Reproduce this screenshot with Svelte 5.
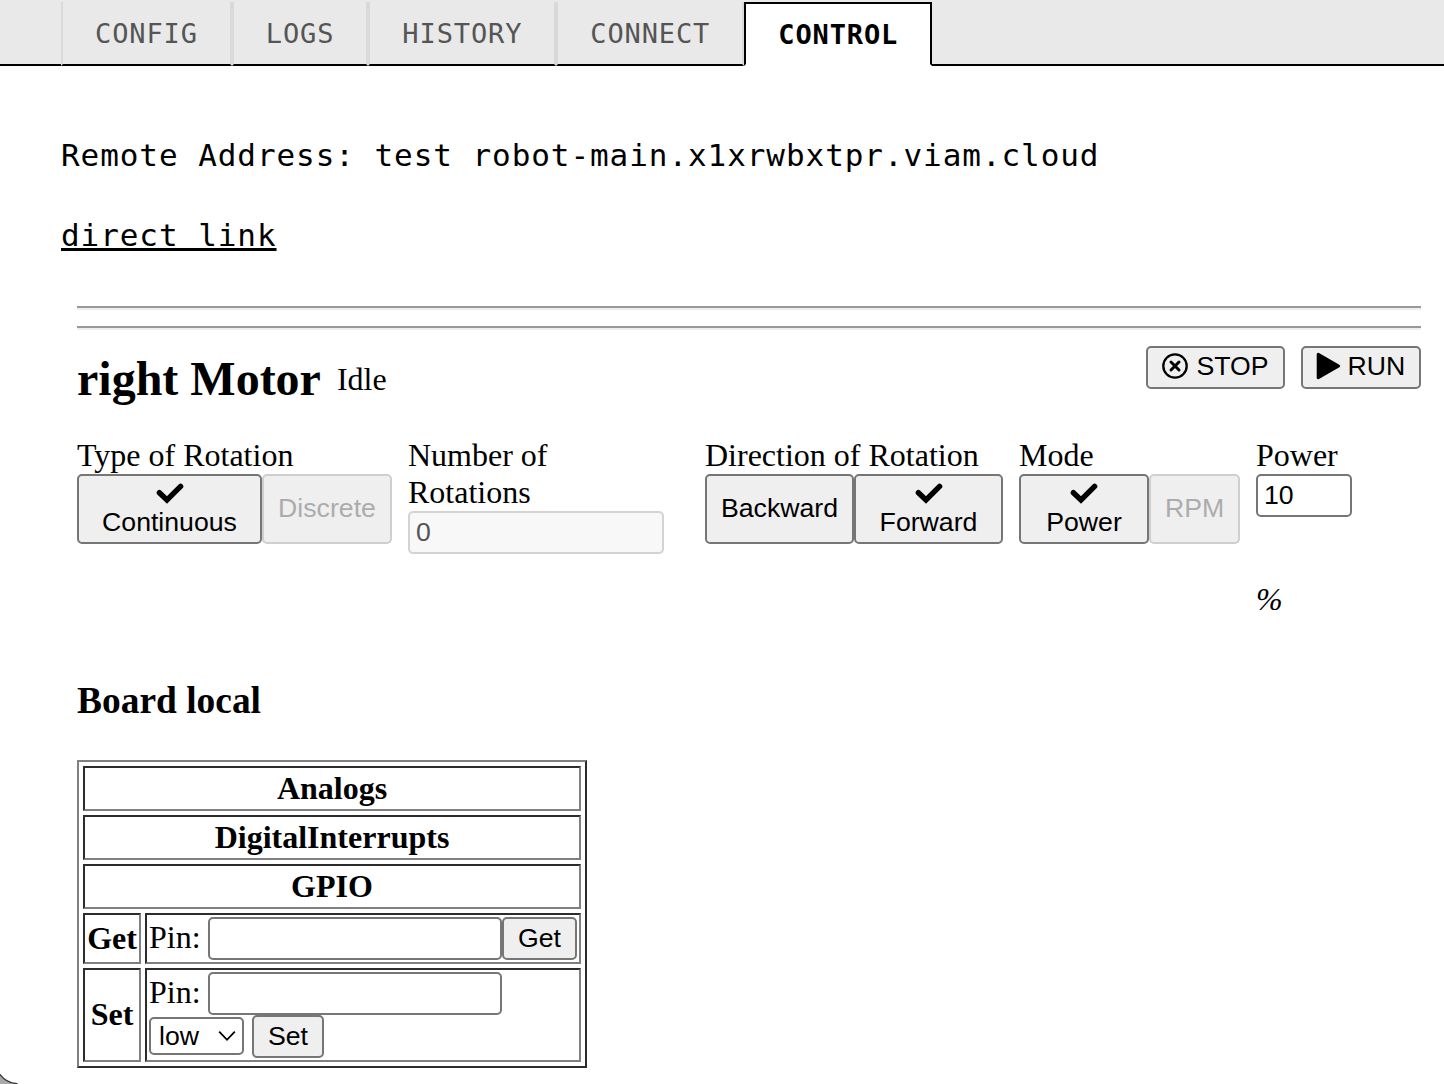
<script>
  const tabs = ['CONFIG', 'LOGS', 'HISTORY', 'CONNECT', 'CONTROL'];
  let active = $state('CONTROL');
  let rotations = $state('0');
  let power = $state('10');
  let getPin = $state('');
  let setPin = $state('');
</script>

{#snippet check()}
  <svg class="check" width="28" height="22" viewBox="0 0 28 22" fill="none" stroke="#000" stroke-width="5.4">
    <path d="M3.4 10.7 L11 18 L24.6 4.4" stroke-linecap="round" stroke-linejoin="miter" />
  </svg>
{/snippet}

<div class="page">
  <nav>
    <span class="lead"></span>
    {#each tabs as tab}
      <a class="tab" class:active={tab === active}>{tab}</a>
    {/each}
    <span class="rest"></span>
  </nav>

  <section class="address">
    <p>Remote Address: test robot-main.x1xrwbxtpr.viam.cloud</p>
    <p><a class="link">direct link</a></p>
  </section>

  <main>
    <hr />
    <hr />
    <header>
      <h2>right Motor</h2>
      <span class="status">Idle</span>
      <div class="actions">
        <button class="stop">
          <svg width="26" height="26" viewBox="0 0 26 26" fill="none" stroke="#000">
            <circle cx="13" cy="13" r="11.7" stroke-width="2.3" />
            <path d="M9 9 L17 17 M17 9 L9 17" stroke-width="3" stroke-linecap="round" />
          </svg>
          STOP
        </button>
        <button class="run">
          <svg width="25" height="28" viewBox="0 0 25 28">
            <path d="M2.2 2.2 L22.6 14 L2.2 25.8 Z" stroke="#000" stroke-width="3" stroke-linejoin="round" />
          </svg>
          RUN
        </button>
      </div>
    </header>

    <div class="controls">
      <div>
        <div class="label">Type of Rotation</div>
        <div class="group type">
          <button class="chosen">{@render check()}Continuous</button>
          <button disabled>Discrete</button>
        </div>
      </div>
      <div class="number">
        <div class="label">Number of Rotations</div>
        <input bind:value={rotations} disabled />
      </div>
      <div>
        <div class="label">Direction of Rotation</div>
        <div class="group direction">
          <button>Backward</button>
          <button class="chosen">{@render check()}Forward</button>
        </div>
      </div>
      <div>
        <div class="label">Mode</div>
        <div class="group mode">
          <button class="chosen">{@render check()}Power</button>
          <button disabled>RPM</button>
        </div>
      </div>
      <div>
        <div class="label">Power</div>
        <input class="power" bind:value={power} />
        <div class="label unit">%</div>
      </div>
    </div>

    <h3>Board local</h3>
    <table>
      <colgroup><col class="c1" /><col class="c2" /></colgroup>
      <tbody>
        <tr><th colspan="2">Analogs</th></tr>
        <tr><th colspan="2">DigitalInterrupts</th></tr>
        <tr><th colspan="2">GPIO</th></tr>
        <tr class="get">
          <th>Get</th>
          <td>
            <div class="line"><span class="pin">Pin:</span><input bind:value={getPin} /><button class="bget">Get</button></div>
          </td>
        </tr>
        <tr class="set">
          <th>Set</th>
          <td>
            <div class="line"><span class="pin">Pin:</span><input bind:value={setPin} /></div>
            <div class="line">
              <div class="select">
                <span>low</span>
                <svg width="18" height="12" viewBox="0 0 18 12" fill="none" stroke="#000" stroke-width="1.8">
                  <path d="M1.2 1.6 L9 9.8 L16.8 1.6" />
                </svg>
              </div>
              <button class="bset">Set</button>
            </div>
          </td>
        </tr>
      </tbody>
    </table>
  </main>

  <svg class="corner" width="18" height="10" viewBox="0 0 18 10">
    <path d="M-1 -1 Q5 8.5 17 9.7 L17 12 L-1 12 Z" fill="#a9a9a9" stroke="#333" stroke-width="1.2" />
  </svg>
</div>

<style>
  :global(body) {
    margin: 0;
    background: #fff;
  }
  .page {
    position: relative;
    width: 1444px;
    height: 1084px;
    overflow: hidden;
    box-sizing: border-box;
    background: #fff;
    color: #000;
    font: 32px/37px 'Liberation Serif', serif;
  }
  .page * {
    box-sizing: border-box;
  }
  nav {
    display: flex;
    height: 66px;
    padding-top: 2px;
    background: #e9e9e9;
    font: 27px/60px 'DejaVu Sans Mono', monospace;
    letter-spacing: 0.88px;
  }
  .lead {
    width: 61px;
    border-bottom: 2px solid #000;
  }
  .rest {
    flex: 1;
    border-bottom: 2px solid #000;
  }
  .tab {
    padding: 2px 32px 0;
    border: 2px solid #d9d9d9;
    border-top: 0;
    border-bottom-color: #000;
    color: #555;
  }
  .tab.active {
    padding-top: 1px;
    border: 2px solid #000;
    border-bottom-color: #fff;
    background: #fff;
    color: #000;
    font-weight: bold;
  }
  .address {
    padding: 69px 61px 0;
    font: 31px/40px 'DejaVu Sans Mono', monospace;
    letter-spacing: 0.93px;
  }
  .address p {
    margin: 0 0 40px;
    white-space: nowrap;
  }
  .link {
    text-decoration: underline;
    text-decoration-thickness: 3px;
    text-underline-offset: 2px;
    text-decoration-skip-ink: none;
  }
  main {
    padding: 11px 23px 0 77px;
  }
  hr {
    height: 4px;
    margin: 0 0 16px;
    border: 0;
    border-top: 2px solid #999;
    border-bottom: 2px solid #eee;
  }
  header {
    display: flex;
    align-items: center;
    height: 67px;
  }
  h2 {
    margin: 0;
    padding-bottom: 2px;
    font-size: 48px;
    line-height: 55px;
  }
  .status {
    margin-left: 16px;
  }
  .actions {
    display: flex;
    gap: 16px;
    margin-left: auto;
    align-self: flex-start;
  }
  button,
  input,
  .select {
    font: 26.67px/31px 'Liberation Sans', sans-serif;
    color: #000;
    border: 2px solid #767676;
    border-radius: 5px;
    margin: 0;
  }
  button {
    display: flex;
    align-items: center;
    justify-content: center;
    height: 43px;
    padding: 0;
    background: #efefef;
  }
  button:disabled {
    color: #acacac;
    border-color: #cfcfcf;
  }
  .stop {
    width: 139px;
    gap: 8px;
    padding-bottom: 2px;
  }
  .run {
    width: 120px;
    gap: 7px;
    padding: 0 1px 2px 0;
  }
  .stop svg,
  .run svg {
    margin-bottom: 1px;
  }
  .controls {
    display: grid;
    grid-template-columns: 315px 281px 298px 221px 96px;
    column-gap: 16px;
    height: 181px;
    margin-top: 24px;
  }
  .number .label {
    width: 256px;
  }
  .number input {
    width: 256px;
  }
  .group {
    display: flex;
  }
  .group button {
    flex-direction: column;
    height: 70px;
    padding-bottom: 2px;
  }
  .group .chosen {
    padding-bottom: 0;
  }
  .check {
    margin: 1px 0 3px;
  }
  .type button:first-child {
    width: 185px;
  }
  .type button:last-child {
    width: 130px;
  }
  .direction button {
    width: 149px;
  }
  .mode button:first-child {
    width: 130px;
  }
  .mode button:last-child {
    width: 91px;
  }
  input {
    display: block;
    height: 43px;
    padding: 0 6px 1px;
    background: #fff;
  }
  input:disabled {
    border-color: #d3d3d3;
    background: #f8f8f8;
    color: #545454;
  }
  .power {
    width: 96px;
  }
  .unit {
    margin-top: 64px;
    font-style: italic;
  }
  h3 {
    margin: 61px 0 37px;
    font-size: 37.44px;
    line-height: 44px;
  }
  table {
    width: 510px;
    table-layout: fixed;
    border-collapse: separate;
    border-spacing: 4px;
    border: 2px solid;
    border-color: #808080 #2c2c2c #2c2c2c #808080;
  }
  .c1 {
    width: 58px;
  }
  .c2 {
    width: 436px;
  }
  tr {
    height: 45px;
  }
  tr.get {
    height: 51px;
  }
  tr.set {
    height: 94px;
  }
  th,
  td {
    padding: 2px;
    border: 2px solid;
    border-color: #2c2c2c #808080 #808080 #2c2c2c;
    vertical-align: middle;
  }
  th {
    padding: 0;
  }
  .set th {
    padding-bottom: 2px;
  }
  .line {
    display: flex;
    align-items: center;
    height: 43px;
  }
  .pin {
    width: 59px;
    padding-bottom: 2px;
  }
  .line input {
    width: 294px;
  }
  .bget {
    width: 75px;
  }
  .bset {
    width: 72px;
    margin-left: 8px;
  }
  .select {
    display: flex;
    align-items: center;
    justify-content: space-between;
    width: 95px;
    height: 38px;
    margin-bottom: 2px;
    padding: 0 6px 0 8px;
    background: #fff;
  }
  .select span {
    padding-top: 1px;
  }
  .corner {
    position: absolute;
    left: 0;
    bottom: 0;
  }
</style>
